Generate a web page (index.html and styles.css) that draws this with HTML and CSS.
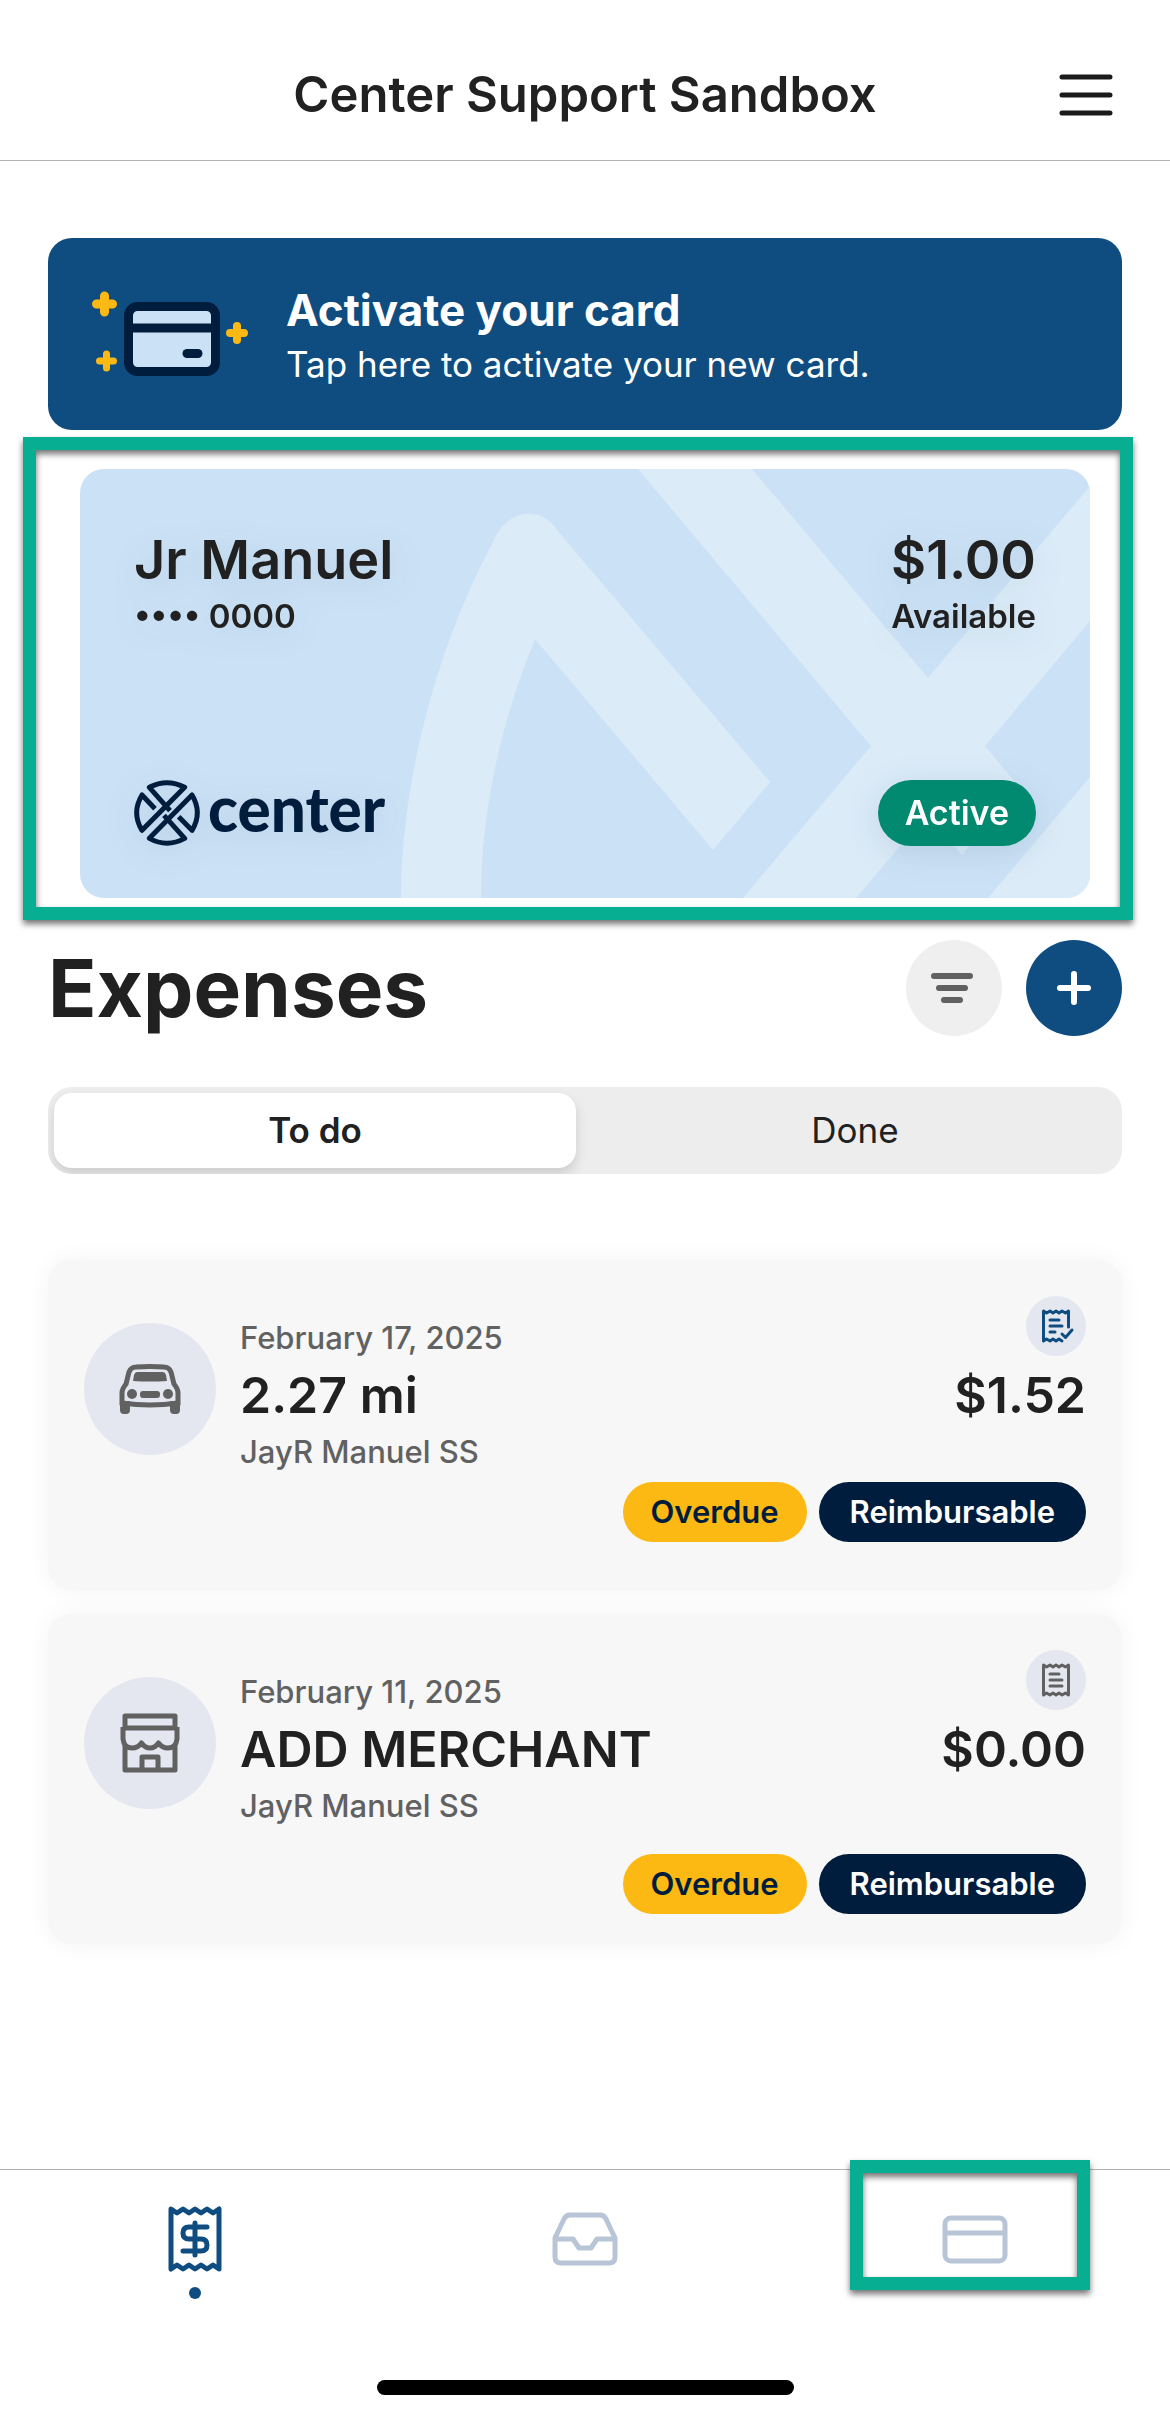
FILE: index.html
```html
<!DOCTYPE html>
<html lang="en">
<head>
  <meta charset="UTF-8">
  <title>Center Support Sandbox</title>
  <meta name="viewport" content="width=device-width, initial-scale=1">
  <link rel="stylesheet" href="styles.css">
</head>
<body>
<header class="topbar">
  <h1 class="topbar-title">Center Support Sandbox</h1>
  <button class="menu-btn" type="button" aria-label="Open menu">
    <svg width="54" height="42" viewBox="0 0 54 42" fill="none" stroke="#1b1b1b" stroke-width="5" stroke-linecap="round">
      <path d="M3 3H51M3 21H51M3 39H51"/>
    </svg>
  </button>
</header>

<main class="content">
  <!-- Activation banner -->
  <a class="banner" href="#activate">
    <svg class="banner-icon" width="158" height="88" viewBox="0 0 158 88" fill="none">
      <rect x="38.500" y="16.500" width="87" height="65" rx="9" fill="#cbe2f6" stroke="#001d3d" stroke-width="9"/>
      <path d="M39 38H125" stroke="#001d3d" stroke-width="9"/>
      <path d="M97 63.500H108" stroke="#001d3d" stroke-width="9" stroke-linecap="round"/>
      <path d="M14.500 6V22M6.500 14H22.500" stroke="#fdb913" stroke-width="9" stroke-linecap="round"/>
      <path d="M16.500 64V78M9.500 71H23.500" stroke="#fdb913" stroke-width="7" stroke-linecap="round"/>
      <path d="M147 36V50M140 43H154" stroke="#fdb913" stroke-width="8" stroke-linecap="round"/>
    </svg>
    <span class="banner-text">
      <strong class="banner-title">Activate your card</strong>
      <span class="banner-sub">Tap here to activate your new card.</span>
    </span>
  </a>

  <!-- Company card -->
  <section class="card-wrap" aria-label="Your card">
    <div class="card">
      <svg class="card-pattern" viewBox="0 0 1010 429" preserveAspectRatio="xMaxYMid slice" fill="#dbebf8" aria-hidden="true">
        <path d="M321 429C322 300 361 170 414 71C427 40 462 36 477 61L690 313L633 381L455 170C422 250 401 340 401 429Z"/>
        <path d="M558 0H672L848 209L1010 17V152L905 277L939 318L882 386L847 345L776 429H663L791 277Z"/>
        <path d="M1010 308V429H908Z"/>
      </svg>
      <div class="card-row">
        <div>
          <div class="card-big">Jr Manuel</div>
          <div class="card-small">•••• 0000</div>
        </div>
        <div class="card-balance">
          <div class="card-big">$1.00</div>
          <div class="card-small">Available</div>
        </div>
      </div>
      <div class="card-row">
        <div class="logo">
          <svg width="66" height="66" viewBox="0 0 198 198" fill="none" stroke="#001d3d" stroke-width="15" stroke-linejoin="round">
            <path d="M108 92L46 22Q99 -6 152 22L24 151Q-8 98 24 45L63 86"/>
            <path d="M90 106L152 175Q99 204 46 175L174 45Q206 98 174 151L134 110"/>
          </svg>
          <span class="logo-name">center</span>
        </div>
        <span class="status">Active</span>
      </div>
    </div>
    <div class="frame frame-card"></div>
  </section>

  <!-- Expenses -->
  <div class="section-head">
    <h2 class="section-title">Expenses</h2>
    <div class="actions">
      <button class="round-btn" type="button" aria-label="Filter">
        <svg width="48" height="36" viewBox="0 0 48 36" fill="none" stroke="#616161" stroke-width="6" stroke-linecap="round">
          <path d="M4 6H40M9 18H35M14 30H30"/>
        </svg>
      </button>
      <button class="round-btn round-btn-primary" type="button" aria-label="Add expense">
        <svg width="36" height="36" viewBox="0 0 36 36" fill="none" stroke="#fff" stroke-width="6" stroke-linecap="round">
          <path d="M18 4V32M4 18H32"/>
        </svg>
      </button>
    </div>
  </div>

  <div class="tabs">
    <button class="tab tab-active" type="button" aria-pressed="true">To do</button>
    <button class="tab" type="button" aria-pressed="false">Done</button>
  </div>

  <div class="expenses">
    <article class="expense">
      <div class="expense-main">
        <div class="avatar">
          <svg width="64" height="52" viewBox="0 0 64 52" fill="#616161">
            <path d="M4 40V30Q4 26 8 21L11 9Q13 4 18 4Q32 3 46 4Q51 4 53 9L56 21Q60 26 60 30V40Q32 44 4 40Z" fill="none" stroke="#616161" stroke-width="5"/>
            <path d="M19 9H45Q47 9 48 12L49 18Q32 19 15 18L16 12Q17 9 19 9Z"/>
            <circle cx="14" cy="31" r="5"/>
            <circle cx="50" cy="31" r="5"/>
            <rect x="22" y="28" width="20" height="7" rx="3"/>
            <path d="M2 38H12V47Q12 51 8 51H6Q2 51 2 47ZM52 38H62V47Q62 51 58 51H56Q52 51 52 47Z"/>
          </svg>
        </div>
        <div class="expense-info">
          <div class="meta">February 17, 2025</div>
          <h3 class="amount">2.27 mi</h3>
          <div class="meta">JayR Manuel SS</div>
        </div>
        <div class="expense-side">
          <svg class="receipt" viewBox="0 0 60 60" fill="none" stroke="#0f4d81" stroke-width="3" stroke-linecap="round" stroke-linejoin="round">
            <path d="M42.500 31V15L39.500 17L36 15L33 17L30 15L27 17L24 15L20.500 17L17.500 15V45L20.500 43L24 45L27 43L30 45L33 43L36 45"/>
            <path d="M24 24H33M24 30H36M24 36H29M36 38L39.500 41.500L46 34"/>
          </svg>
          <div class="amount">$1.52</div>
        </div>
      </div>
      <div class="pills">
        <span class="pill pill-overdue">Overdue</span>
        <span class="pill pill-reimb">Reimbursable</span>
      </div>
    </article>

    <article class="expense expense-merchant">
      <div class="expense-main">
        <div class="avatar">
          <svg width="60" height="60" viewBox="0 0 60 60" fill="none" stroke="#616161" stroke-width="5" stroke-linejoin="round">
            <path d="M5 15V3H55V15M5 32V57H55V32M3 15H57"/>
            <path d="M3 14V26Q4 35 12 35Q18 35 21.500 30Q25 35 30 35Q35 35 38.500 30Q42 35 48 35Q56 35 57 26V14"/>
            <path d="M22 57V44H38V57"/>
          </svg>
        </div>
        <div class="expense-info">
          <div class="meta">February 11, 2025</div>
          <h3 class="amount">ADD MERCHANT</h3>
          <div class="meta">JayR Manuel SS</div>
        </div>
        <div class="expense-side">
          <svg class="receipt" viewBox="0 0 60 60" fill="none" stroke="#616161" stroke-width="3" stroke-linecap="round" stroke-linejoin="round">
            <path d="M42.500 15L39.500 17L36 15L33 17L30 15L27 17L24 15L20.500 17L17.500 15V45L20.500 43L24 45L27 43L30 45L33 43L36 45L39.500 43L42.500 45Z"/>
            <path d="M24 24H33M24 30H36M24 36H36"/>
          </svg>
          <div class="amount">$0.00</div>
        </div>
      </div>
      <div class="pills">
        <span class="pill pill-overdue">Overdue</span>
        <span class="pill pill-reimb">Reimbursable</span>
      </div>
    </article>
  </div>
</main>

<footer class="bottom">
  <nav class="nav" aria-label="Main">
    <a class="nav-item nav-active" href="#expenses" aria-label="Expenses">
      <svg width="54" height="66" viewBox="0 0 54 66" fill="none" stroke="currentColor" stroke-width="5" stroke-linejoin="round" stroke-linecap="round">
        <path d="M3 3L9 7L15 3L21 7L27 3L33 7L39 3L45 7L51 3V63L45 59L39 63L33 59L27 63L21 59L15 63L9 59L3 63Z"/>
        <path d="M39 21H21Q15 21 15 27T21 33H33Q39 33 39 39T33 45H15M27 17V49"/>
      </svg>
    </a>
    <a class="nav-item" href="#inbox" aria-label="Inbox">
      <svg width="66" height="66" viewBox="0 0 66 66" fill="none" stroke="currentColor" stroke-width="5" stroke-linejoin="round">
        <path d="M3 32V51Q3 57 9 57H57Q63 57 63 51V32L54 13Q52 9 48 9H18Q14 9 12 13ZM3 33H21L27 42H39L45 33H63"/>
      </svg>
    </a>
    <a class="nav-item" href="#cards" aria-label="Cards">
      <svg width="66" height="66" viewBox="0 0 66 66" fill="none" stroke="currentColor" stroke-width="5">
        <rect x="3" y="12" width="60" height="43" rx="6"/>
        <path d="M3 27H63"/>
      </svg>
      <span class="frame frame-nav"></span>
    </a>
  </nav>
  <div class="home-bar"></div>
</footer>
</body>
</html>
```

FILE: styles.css
```css
* {
  box-sizing: border-box;
}
body {
  margin: 0;
  min-height: 100vh;
  display: flex;
  flex-direction: column;
  background: #fff;
  color: #212121;
  font-family: Inter, "Liberation Sans", sans-serif;
}
h1, h2, h3 {
  margin: 0;
  font-weight: 600;
}
button {
  border: none;
  padding: 0;
  background: none;
  color: inherit;
  font-family: inherit;
  cursor: pointer;
}
a {
  color: inherit;
  text-decoration: none;
}
svg {
  display: block;
  flex: none;
}

/* Header */
.topbar {
  display: grid;
  grid-template-columns: 1fr auto 1fr;
  align-items: center;
  padding: 64px 57px 34px;
  border-bottom: 1px solid #b3b3b3;
}
.topbar-title {
  grid-column: 2;
  font-size: 49px;
  line-height: 62px;
}
.menu-btn {
  justify-self: end;
}

.content {
  flex: 1;
  padding: 77px 48px 48px;
}

/* Banner */
.banner {
  display: flex;
  align-items: center;
  gap: 38px;
  min-height: 192px;
  padding: 36px 42px;
  border-radius: 24px;
  background: #0f4d81;
  color: #fff;
}
.banner-text {
  display: flex;
  flex-direction: column;
}
.banner-title {
  font-size: 44px;
  line-height: 60px;
}
.banner-sub {
  font-size: 35px;
  line-height: 48px;
}

/* Company card */
.card-wrap {
  position: relative;
  margin: 39px 32px 42px;
}
.card {
  position: relative;
  overflow: hidden;
  display: flex;
  flex-direction: column;
  gap: 140px;
  padding: 58px 54px 52px;
  border-radius: 24px;
  background: #cbe2f6;
}
.card-pattern {
  position: absolute;
  inset: 0;
  width: 100%;
  height: 100%;
}
.card-row {
  position: relative;
  display: flex;
  align-items: center;
  justify-content: space-between;
  filter: drop-shadow(0 6px 16px rgba(0, 29, 61, 0.1));
}
.card-balance {
  text-align: right;
}
.card-big {
  font-size: 54px;
  font-weight: 600;
  line-height: 66px;
}
.card-small {
  font-size: 33px;
  font-weight: 600;
  line-height: 47px;
}
.logo {
  display: flex;
  align-items: flex-start;
  gap: 8px;
  height: 66px;
}
.logo-name {
  color: #001d3d;
  font-family: Lato, sans-serif;
  font-size: 62px;
  font-weight: 900;
  line-height: 56px;
}
.status {
  padding: 0 27px;
  border-radius: 33px;
  background: #028a71;
  color: #fff;
  font-size: 34px;
  font-weight: 600;
  line-height: 66px;
}

/* Green callout frames */
.frame {
  position: absolute;
  border: 13px solid #07ae92;
  filter: drop-shadow(0 4px 3px rgba(0, 0, 0, 0.55));
  pointer-events: none;
}
.frame-card {
  inset: -32px -43px -22px -57px;
}
.frame-nav {
  width: 240px;
  height: 130px;
  left: 70px;
  top: -10px;
}

/* Expenses */
.section-head {
  display: flex;
  align-items: center;
  justify-content: space-between;
}
.section-title {
  font-size: 80px;
  font-weight: 700;
  line-height: 96px;
}
.actions {
  display: flex;
  gap: 24px;
}
.round-btn {
  display: grid;
  place-items: center;
  width: 96px;
  height: 96px;
  border-radius: 50%;
  background: #efefef;
}
.round-btn-primary {
  background: #0f4d81;
}

.tabs {
  display: grid;
  grid-template-columns: 1fr 1fr;
  gap: 18px;
  margin: 51px 0 86px;
  padding: 6px;
  border-radius: 24px;
  background: #ededed;
  overflow: hidden;
}
.tab {
  border-radius: 18px;
  font-size: 35px;
  line-height: 75px;
}
.tab-active {
  background: #fff;
  font-weight: 600;
  box-shadow: 0 6px 12px rgba(0, 0, 0, 0.14);
}

.expenses {
  display: flex;
  flex-direction: column;
  gap: 24px;
}
.expense {
  padding: 36px 36px 48px;
  border-radius: 24px;
  background: #f7f7f7;
  box-shadow: 0 0 24px rgba(0, 0, 0, 0.05);
}
.expense-main {
  display: flex;
  gap: 24px;
}
.avatar {
  display: grid;
  place-items: center;
  width: 132px;
  height: 132px;
  margin-top: 27px;
  border-radius: 50%;
  background: #e4e7ef;
}
.expense-info {
  flex: 1;
  padding-top: 18px;
}
.expense-side {
  display: flex;
  flex-direction: column;
  align-items: flex-end;
  gap: 6px;
}
.receipt {
  width: 60px;
  height: 60px;
  border-radius: 50%;
  background: #e4e7ef;
}
.meta {
  color: #616161;
  font-size: 31px;
  font-weight: 500;
  line-height: 48px;
}
.amount {
  font-size: 50px;
  font-weight: 600;
  line-height: 66px;
}
.pills {
  display: flex;
  justify-content: flex-end;
  gap: 12px;
  margin-top: 6px;
}
.pill {
  border-radius: 30px;
  font-size: 31px;
  font-weight: 600;
  line-height: 60px;
}
.pill-overdue {
  padding: 0 28px;
  background: #fdb913;
  color: #001d3d;
}
.pill-reimb {
  padding: 0 31px;
  background: #001d3d;
  color: #fff;
}
.expense-merchant {
  padding-bottom: 30px;
}
.expense-merchant .pills {
  margin-top: 24px;
}

/* Bottom navigation */
.bottom {
  padding-bottom: 24px;
  border-top: 1px solid #b3b3b3;
}
.nav {
  display: grid;
  grid-template-columns: repeat(3, 1fr);
}
.nav-item {
  position: relative;
  display: flex;
  flex-direction: column;
  align-items: center;
  gap: 15px;
  height: 210px;
  padding-top: 36px;
  color: #b8c5d6;
}
.nav-active {
  color: #0f4d81;
}
.nav-active::after {
  content: "";
  width: 12px;
  height: 12px;
  border-radius: 50%;
  background: #0f4d81;
}
.home-bar {
  width: 417px;
  max-width: 60%;
  height: 15px;
  margin: 0 auto;
  border-radius: 8px;
  background: #000;
}
```
